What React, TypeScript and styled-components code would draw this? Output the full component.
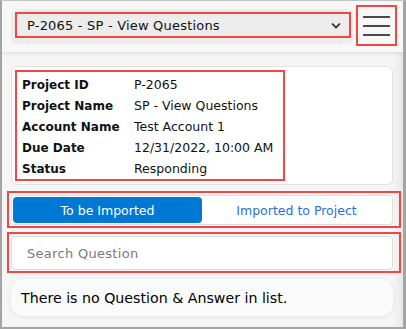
import { Fragment } from 'react'
import styled, { createGlobalStyle } from 'styled-components'

const GlobalStyle = createGlobalStyle`
  html, body {
    margin: 0;
    padding: 0;
    background: #ffffff;
  }
  * {
    box-sizing: border-box;
  }
`

const Frame = styled.div`
  width: 406px;
  height: 329px;
  border: 2px solid #a4a4a4;
  border-top: 1px solid #c4c4c4;
  border-right-width: 3px;
  background: linear-gradient(to right, #f5f5f5 0, #f5f5f5 390px, #e9e9e9 401px);
  font-family: 'DejaVu Sans', Verdana, sans-serif;
  color: #111;
  overflow: hidden;
`

const Header = styled.header`
  display: flex;
  align-items: flex-start;
  height: 51px;
  padding: 4px 6px 0 9px;
  background: #f7f7f7;
  box-shadow: 0 2px 3px rgba(0, 0, 0, 0.08);
`

const SelectWrap = styled.div`
  flex: 1;
  margin-top: 4px;
  padding: 3px 2px 6px 4px;
  background: #ececec;
  border-radius: 6px;
`

const Marked = styled.div`
  border: 2px solid #f04646;
`

const Select = styled(Marked)`
  display: flex;
  align-items: center;
  justify-content: space-between;
  height: 26px;
  padding: 0 8px 0 10px;
  font-size: 13px;
  letter-spacing: 0.2px;
`

const MenuButton = styled(Marked)`
  display: flex;
  flex-direction: column;
  justify-content: space-between;
  width: 41px;
  height: 41px;
  margin-left: 3px;
  padding: 9px 5px 8px 5px;
`

const MenuLine = styled.span`
  display: block;
  height: 2px;
  background: #4a4a4a;
`

const Body = styled.main`
  display: flex;
  flex-direction: column;
  padding: 14px 10px 0 9px;
`

const Card = styled.section`
  background: #fff;
  border: 1px solid #e2e2e2;
  border-radius: 6px;
  padding: 3px;
`

const InfoBox = styled(Marked)`
  width: 270px;
  display: grid;
  grid-template-columns: 112px auto;
  grid-auto-rows: 21px;
  align-items: center;
  padding: 2px 5px 0 5px;
`

const Label = styled.div`
  font-size: 12px;
  font-weight: 700;
  white-space: nowrap;
`

const Value = styled.div`
  font-size: 12.5px;
  white-space: nowrap;
`

const Zone = styled(Marked)<{ $top: number }>`
  margin: ${p => p.$top}px -8px 0 -4px;
  padding: 2px 6px 1px 2px;
`

const Tabs = styled.div`
  display: flex;
  height: 30px;
  padding: 1px;
  background: #fff;
  border: 1px solid #e0e0e0;
  border-radius: 4px;
`

const Tab = styled.div<{ $active?: boolean }>`
  flex: 1;
  display: flex;
  align-items: center;
  justify-content: center;
  border-radius: 4px;
  font-size: 12.5px;
  background: ${p => (p.$active ? '#0078d4' : 'transparent')};
  color: ${p => (p.$active ? '#ffffff' : '#2b6fd6')};
`

const SearchInput = styled.input`
  display: block;
  width: 100%;
  height: 34px;
  padding: 0 15px;
  background: #fff;
  border: 1px solid #dcdcdc;
  border-radius: 4px;
  font-family: 'DejaVu Sans', Verdana, sans-serif;
  font-size: 13px;
  letter-spacing: 0.3px;
  outline: none;
  &::placeholder {
    color: #7a7a7a;
  }
`

const Message = styled.div`
  margin-top: 6px;
  height: 37px;
  display: flex;
  align-items: center;
  padding: 0 10px;
  background: #fafafa;
  border-radius: 12px;
  box-shadow: 0 1px 4px rgba(0, 0, 0, 0.08);
  font-size: 14.2px;
  color: #000;
`

const Chevron = () => (
  <svg width='10' height='7' viewBox='0 0 10 7'>
    <path d='M1 1.5 L5 5.5 L9 1.5' fill='none' stroke='#222' strokeWidth='1.6' />
  </svg>
)

const details: [string, string][] = [
  ['Project ID', 'P-2065'],
  ['Project Name', 'SP - View Questions'],
  ['Account Name', 'Test Account 1'],
  ['Due Date', '12/31/2022, 10:00 AM'],
  ['Status', 'Responding'],
]

export default function App() {
  return (
    <>
      <GlobalStyle />
      <Frame>
        <Header>
          <SelectWrap>
            <Select>
              <span>P-2065 - SP - View Questions</span>
              <Chevron />
            </Select>
          </SelectWrap>
          <MenuButton>
            <MenuLine />
            <MenuLine />
            <MenuLine />
          </MenuButton>
        </Header>
        <Body>
          <Card>
            <InfoBox>
              {details.map(([label, value]) => (
                <Fragment key={label}>
                  <Label>{label}</Label>
                  <Value>{value}</Value>
                </Fragment>
              ))}
            </InfoBox>
          </Card>
          <Zone $top={6}>
            <Tabs>
              <Tab $active>To be Imported</Tab>
              <Tab>Imported to Project</Tab>
            </Tabs>
          </Zone>
          <Zone $top={4}>
            <SearchInput placeholder='Search Question' />
          </Zone>
          <Message>There is no Question &amp; Answer in list.</Message>
        </Body>
      </Frame>
    </>
  )
}
